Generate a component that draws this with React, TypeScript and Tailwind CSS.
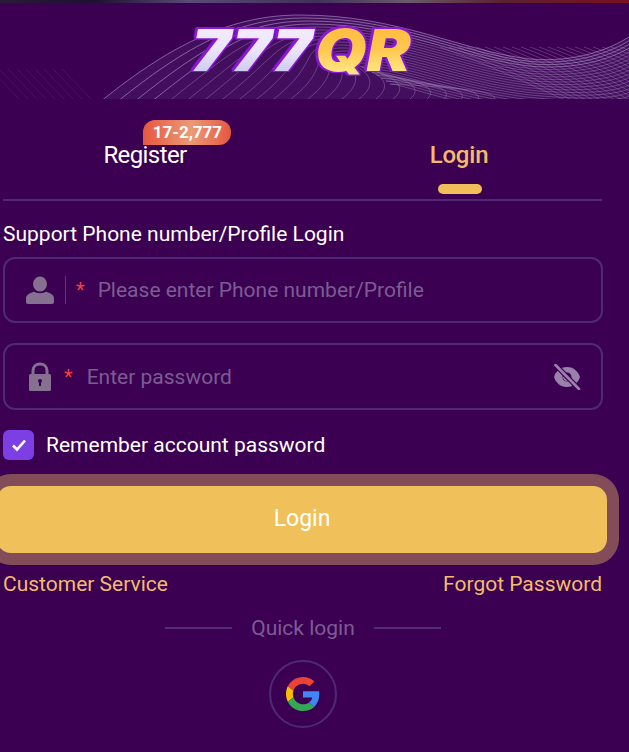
import { Fragment } from 'react';

const FONT = "font-['Roboto','Liberation_Sans',sans-serif]";

function wavePath(i: number) {
  // each line starts further along the bottom edge and sits lower under the crest
  const startX = 100 + i * 17;
  const crest = 12 + i * 3;
  const dipY = 56 + i * 2.4;
  return `M${startX} 99 C${175 + i * 15} ${38 + i * 2} ${235 + i * 6} ${crest} ${300 + i * 4} ${crest} C${400} ${crest} ${460} ${dipY - 8} ${530} ${dipY} C${575} ${dipY + 4} ${610} ${dipY - 10 + i} 629 ${dipY - 22 + i * 1.3}`;
}

function crossPath(i: number) {
  return `M${440 + i * 9} 44 C${490 + i * 9} 62 ${530 + i * 8} 82 ${570 + i * 7} 99`;
}

function Banner() {
  return (
    <svg className="absolute inset-0 h-full w-full" viewBox="0 0 629 96" preserveAspectRatio="none" aria-hidden>
      <path d="M100 99 C175 38 235 12 300 12 C400 12 460 48 530 56 C575 60 610 46 629 34 V99 Z" fill="#430e5e" />
      {Array.from({ length: 24 }, (_, i) => (
        <path key={i} d={wavePath(i)} fill="none" stroke="#b79ccb" strokeWidth="0.8" opacity={i < 4 ? 0.75 : 0.45} />
      ))}
      {Array.from({ length: 22 }, (_, i) => (
        <path key={i} d={crossPath(i)} fill="none" stroke="#b79ccb" strokeWidth="0.8" opacity="0.4" />
      ))}
      {Array.from({ length: 9 }, (_, i) => (
        <path key={i} d={`M${-10 + i * 9} 66 L${22 + i * 9} 99`} stroke="#7a5a92" strokeWidth="0.6" opacity="0.35" />
      ))}
    </svg>
  );
}

function PersonIcon() {
  return (
    <svg width="28" height="28" viewBox="0 0 28 28" fill="#85718f" aria-hidden>
      <ellipse cx="14" cy="8" rx="7" ry="7.4" />
      <path d="M0 26 V22.5 C0 19 3 17.6 7.5 15.8 C11 17.6 17 17.6 20.5 15.8 C25 17.6 28 19 28 22.5 V26 C28 27 27 28 26 28 H2 C1 28 0 27 0 26 Z" />
    </svg>
  );
}

function LockIcon() {
  return (
    <svg width="22" height="29" viewBox="0 0 22 29" aria-hidden>
      <path d="M4 13 V8.5 C4 4.5 7 2 11 2 C15 2 18 4.5 18 8.5 V13" fill="none" stroke="#85718f" strokeWidth="3" />
      <rect x="0" y="12" width="22" height="17" rx="1.5" fill="#85718f" />
      <circle cx="11" cy="19" r="2" fill="#3b0052" />
      <rect x="10" y="19" width="2" height="5" fill="#3b0052" />
    </svg>
  );
}

function EyeOffIcon() {
  return (
    <svg width="28" height="26" viewBox="0 0 28 26" aria-hidden>
      <path
        fill="#9a80ab"
        fillRule="evenodd"
        d="M14 3 C21 3 25.500 8 27 13 C25.500 18 21 23 14 23 C7 23 2.500 18 1 13 C2.500 8 7 3 14 3 Z M14 8.500 A4.500 4.500 0 1 0 14 17.500 A4.500 4.500 0 1 0 14 8.500 Z"
      />
      <path d="M12.500 11 A2.500 2.500 0 0 0 15 15.500" fill="none" stroke="#9a80ab" strokeWidth="2" />
      <path d="M2.500 1 L26 25" stroke="#3b0052" strokeWidth="5" />
      <path d="M2.500 1 L26 25" stroke="#9a80ab" strokeWidth="2.600" strokeLinecap="round" />
    </svg>
  );
}

function GoogleLogo() {
  return (
    <svg width="34" height="34" viewBox="0 0 48 48" aria-hidden>
      <path fill="#ea4335" d="M24 9.500c3.500 0 6.700 1.200 9.200 3.600l6.900-6.900C35.900 2.400 30.500 0 24 0 14.600 0 6.500 5.400 2.600 13.200l8 6.200C12.400 13.700 17.700 9.500 24 9.500z" />
      <path fill="#4285f4" d="M47 24.500c0-1.600-.2-3.100-.4-4.500H24v9h13c-.6 3-2.300 5.500-4.800 7.200l7.700 6c4.500-4.200 7.100-10.300 7.100-17.700z" />
      <path fill="#fbbc05" d="M10.500 28.600c-.5-1.400-.8-3-.8-4.600s.3-3.200.8-4.600l-8-6.200C.9 16.500 0 20.100 0 24s.9 7.500 2.600 10.800l7.900-6.200z" />
      <path fill="#34a853" d="M24 48c6.500 0 11.900-2.100 15.900-5.800l-7.700-6c-2.200 1.500-5 2.300-8.200 2.300-6.300 0-11.600-4.200-13.500-9.900l-7.900 6.200C6.500 42.600 14.600 48 24 48z" />
    </svg>
  );
}

function Field({ icon, placeholder, right, divider }: { icon: React.ReactNode; placeholder: string; right?: React.ReactNode; divider?: boolean }) {
  return (
    <div className={`flex w-[600px] items-center rounded-[12px] border-2 border-[#4f2a72] pr-[20px] ${divider ? 'h-[66px] pl-[21px]' : 'h-[67px] pl-[24px]'}`}>
      {icon}
      {divider && <div className="ml-[11px] h-[28px] w-px bg-[#5b3a74]" />}
      <span className={`text-[20px] leading-none text-[#f0443e] ${divider ? 'ml-[10px]' : 'ml-[13px]'}`}>*</span>
      <span className={`pt-[2px] text-[21px] text-[#7c5c92] ${divider ? 'ml-[13px]' : 'ml-[14px]'}`}>{placeholder}</span>
      {right && <div className="ml-auto">{right}</div>}
    </div>
  );
}

export default function App() {
  return (
    <div className={`relative h-[752px] w-[629px] overflow-hidden bg-[#3b0052] ${FONT}`}>
      <div className="h-[3px] bg-[linear-gradient(90deg,#2a1a3a_0%,#1d1030_15%,#5a4a78_30%,#40305a_50%,#6a5a6a_65%,#5a2030_80%,#7a1020_100%)]" />

      <header className="relative flex h-[96px] items-center justify-center pr-[24px]">
        <Banner />
        <div className="relative mt-[-2px] flex scale-x-[1.14] font-['Inter','Liberation_Sans',sans-serif] text-[58px] font-black italic leading-none [filter:drop-shadow(1.5px_0_0_#8a18d8)_drop-shadow(-1.5px_0_0_#8a18d8)_drop-shadow(0_1.5px_0_#8a18d8)_drop-shadow(0_-1.5px_0_#8a18d8)]">
          <span className="bg-gradient-to-b from-[#f6efff] via-[#ece4f8] to-[#c4c4ea] bg-clip-text pr-[3px] text-transparent">777</span>
          <span className="bg-gradient-to-b from-[#ffb938] via-[#ffc850] to-[#fff08e] bg-clip-text pr-[3px] text-transparent">QR</span>
        </div>
      </header>

      <main className="pl-[3px]">
        <div className="w-[599px] border-b-2 border-[#4f2a72]">
          <div className="ml-[-15px] grid h-[100px] w-[628px] grid-cols-2">
            <div className="flex flex-col items-center pt-[40px]">
              <div className="relative">
                <span className="text-[24px] leading-[32px] tracking-[-0.6px] text-white">Register</span>
                <span className="absolute left-[40px] top-[-19px] flex h-[25px] w-[88px] items-center justify-center rounded-[12px_12px_12px_0] bg-[linear-gradient(90deg,#e5573f_0%,#eb9a77_55%,#e5573f_100%)] text-[17px] font-bold text-white">17-2,777</span>
              </div>
            </div>
            <div className="flex flex-col items-center pt-[40px]">
              <span className="text-[24px] font-medium leading-[32px] tracking-[-0.2px] text-[#f2bd6b]">Login</span>
              <span className="ml-[2px] mt-[13px] h-[10px] w-[44px] rounded-full bg-[#f0bf59]" />
            </div>
          </div>
        </div>

        <p className="mt-[19px] text-[21px] leading-[28px] text-white">Support Phone number/Profile Login</p>

        <div className="mt-[9px] flex flex-col gap-[20px]">
          <Field icon={<PersonIcon />} placeholder="Please enter Phone number/Profile" divider />
          <Field icon={<LockIcon />} placeholder="Enter password" right={<EyeOffIcon />} />
        </div>

        <label className="mt-[19px] flex items-center gap-[12px]">
          <span className="flex h-[30px] w-[31px] items-center justify-center rounded-[6px] bg-[#7b3fe4]">
            <svg width="16" height="14" viewBox="0 0 16 14" fill="none" aria-hidden>
              <path d="M2 7.500 L6 11.500 L14 2.500" stroke="white" strokeWidth="2.600" />
            </svg>
          </span>
          <span className="mt-[1px] text-[21px] text-white">Remember account password</span>
        </label>

        <button className="ml-[-6px] mt-[24px] block h-[67px] w-[610px] rounded-[14px] bg-[#f0c05a] text-[23px] text-white shadow-[0_0_0_12px_#824d58]">
          Login
        </button>

        <div className="mt-[18px] flex w-[599px] justify-between text-[21px] leading-[26px] text-[#f2bd6b]">
          <span>Customer Service</span>
          <span>Forgot Password</span>
        </div>

        <div className="mt-[16px] flex w-[600px] items-center justify-center gap-[19px] text-[21px] text-[#7c5c92]">
          {['left', 'right'].map((side, i) => (
            <Fragment key={side}>
              {i === 1 && <span>Quick login</span>}
              <span className="h-[2px] w-[67px] bg-[#52306f]" />
            </Fragment>
          ))}
        </div>

        <div className="ml-[266px] mt-[16px] flex h-[68px] w-[68px] items-center justify-center rounded-full border-2 border-[#4f2a72]">
          <GoogleLogo />
        </div>
      </main>
    </div>
  );
}
